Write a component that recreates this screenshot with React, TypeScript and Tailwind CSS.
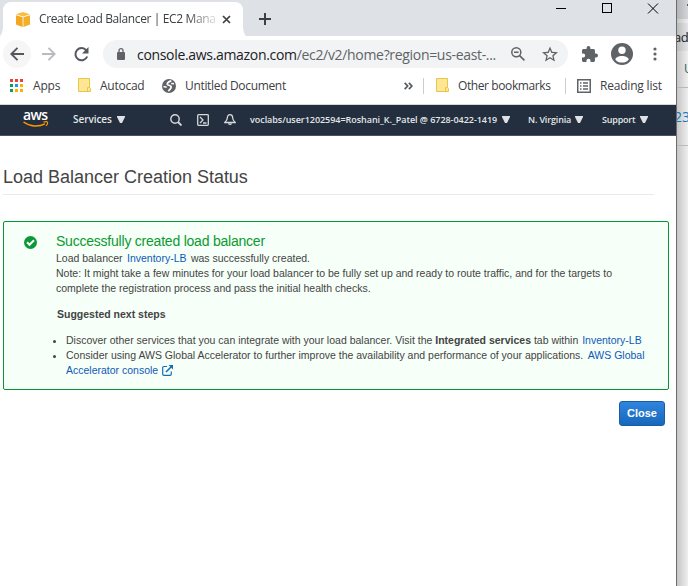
import React from "react";

const ui = "font-['Open_Sans','Noto_Sans',sans-serif]";

function Caret({ className = "" }: { className?: string }) {
  return (
    <svg className={"h-[7px] w-[8px] shrink-0 " + className} viewBox="0 0 8 7">
      <path d="M0 0h8v1L5 7H3L0 1z" fill="#dfe1e4" />
    </svg>
  );
}

function Folder({ className = "" }: { className?: string }) {
  return (
    <svg className={"h-[15px] w-[13px] shrink-0 " + className} viewBox="0 0 13 15">
      <path d="M0.500 0.500h11v9l1 1v3h-12z" fill="#ffe694" stroke="#e8c648" />
      <path d="M9.500 13.500v-4h2" fill="none" stroke="#e8c648" />
    </svg>
  );
}

function TabStrip() {
  return (
    <div className="flex h-9 items-end bg-[#dee1e6]">
      <div className="flex h-[34px] w-[3px] items-end bg-[#dee1e6]">
        <div className="h-2 w-[3px] bg-white [clip-path:polygon(100%_0,100%_100%,0_100%,60%_70%)]" />
      </div>
      <div className="flex h-[34px] w-[240px] items-center rounded-t-[8px] bg-white">
        <svg className="ml-[13px] h-[15px] w-[14px] shrink-0" viewBox="0 0 14 15">
          <path d="M7 0l7 2.300-7 2.100L0 2.300z" fill="#f9bd3b" />
          <path d="M0 3.200l6.600 2V15L0 12.600z" fill="#f2a71f" />
          <path d="M14 3.200l-6.600 2V15L14 12.600z" fill="#f5ae27" />
        </svg>
        <div className={"ml-[9px] w-[176px] shrink-0 whitespace-nowrap text-[12px] tracking-[-0.37px] text-[#3c4043] [mask-image:linear-gradient(to_right,#000_148px,transparent_182px)] " + ui}>
          Create Load Balancer | EC2 Mana
        </div>
        <svg className="ml-[7px] h-[9px] w-[9px] shrink-0" viewBox="0 0 9 9">
          <path d="M1 1l7 7M8 1l-7 7" stroke="#3c4043" strokeWidth="1.700" />
        </svg>
      </div>
      <div className="flex h-[34px] w-[3px] items-end">
        <div className="h-2 w-[3px] bg-white [clip-path:polygon(0_0,0_100%,100%_100%,40%_70%)]" />
      </div>
      <svg className="mb-[11px] ml-[13px] h-3 w-3 shrink-0" viewBox="0 0 12 12">
        <path d="M6 0v12M0 6h12" stroke="#3c4043" strokeWidth="2" />
      </svg>
      <svg className="mb-[22px] ml-[285px] h-[11px] w-[103px] shrink-0" viewBox="0 0 103 11" shapeRendering="crispEdges">
        <path d="M0 5.500h10" stroke="#000" />
        <rect x="46.500" y="0.500" width="9" height="9" fill="none" stroke="#000" />
        <path d="M92 0.500l10 10M102 0.500l-10 10" stroke="#000" shapeRendering="auto" />
      </svg>
    </div>
  );
}

function Toolbar() {
  return (
    <div className="flex h-9 items-center bg-white">
      <div className="ml-[3px] flex h-7 w-7 shrink-0 items-center justify-center rounded-full bg-[#f6f6f6]">
        <svg className="h-[14px] w-[14px]" viewBox="0 0 14 14">
          <path d="M14 7H1.500M7.500 0.800L1.300 7l6.200 6.200" fill="none" stroke="#54585d" strokeWidth="1.900" />
        </svg>
      </div>
      <svg className="ml-[11px] h-[14px] w-[14px] shrink-0" viewBox="0 0 14 14">
        <path d="M0 7h12.500M6.500 0.800L12.700 7l-6.200 6.200" fill="none" stroke="#b9bbbe" strokeWidth="1.900" />
      </svg>
      <svg className="ml-[18px] h-[15px] w-[15px] shrink-0" viewBox="0 0 15 15">
        <path d="M12.300 3.400A6.100 6.100 0 1 0 13.200 9.500" fill="none" stroke="#54585d" strokeWidth="2" />
        <path d="M14.500 0v6.500H8z" fill="#54585d" />
      </svg>
      <div className="ml-[14px] flex h-7 w-[465px] shrink-0 items-center rounded-full bg-[#f1f3f4]">
        <svg className="ml-[14px] h-[12px] w-[8px] shrink-0" viewBox="0 0 8 12">
          <path d="M2 5V2.700a2 2 0 0 1 4 0V5" fill="none" stroke="#5f6368" strokeWidth="1.300" />
          <rect y="4" width="8" height="8" rx="1" fill="#5f6368" />
        </svg>
        <div className={"ml-[12px] w-[366px] shrink-0 whitespace-nowrap text-[14px] tracking-[-0.32px] text-[#5f6368] " + ui}>
          <span className="text-[#202124]">console.aws.amazon.com</span>/ec2/v2/home?region=us-east-...
        </div>
        <svg className="ml-[8px] h-[14px] w-[14px] shrink-0" viewBox="0 0 14 14">
          <circle cx="5.300" cy="5.300" r="4.500" fill="none" stroke="#5f6368" strokeWidth="1.500" />
          <path d="M3 5.300h4.600M8.600 8.600l4.800 4.800" stroke="#5f6368" strokeWidth="1.600" />
        </svg>
        <svg className="ml-[17px] h-[16px] w-[16px] shrink-0" viewBox="2 1.500 20 20">
          <path d="M22 9.240l-7.190-.62L12 2 9.190 8.630 2 9.240l5.460 4.730L5.820 21 12 17.270 18.180 21l-1.630-7.030L22 9.240zM12 15.400l-3.760 2.270 1-4.280-3.320-2.880 4.380-.38L12 6.100l1.710 4.040 4.380.38-3.320 2.880 1 4.280L12 15.400z" fill="#5f6368" />
        </svg>
      </div>
      <svg className="ml-[14px] h-[16px] w-[16px] shrink-0" viewBox="2 1 21 21">
        <path d="M20.500 11H19V7c0-1.100-.9-2-2-2h-4V3.500a2.500 2.500 0 0 0-5 0V5H4c-1.100 0-1.990.9-1.990 2v3.800H3.500a2.700 2.700 0 0 1 0 5.400H2V20c0 1.100.9 2 2 2h3.800v-1.500a2.700 2.700 0 0 1 5.400 0V22H17c1.100 0 2-.9 2-2v-4h1.500a2.500 2.500 0 0 0 0-5z" fill="#5f6368" />
      </svg>
      <svg className="ml-[13px] h-[22px] w-[22px] shrink-0" viewBox="0 0 22 22">
        <circle cx="11" cy="11" r="11" fill="#5f6368" />
        <circle cx="11" cy="7.200" r="3.700" fill="#fff" />
        <path d="M11 13c3.200 0 6.500 1.500 6.700 3.400a8.600 8.600 0 0 1-13.400 0C4.500 14.500 7.800 13 11 13z" fill="#fff" />
      </svg>
      <svg className="ml-[20px] h-[14px] w-[4px] shrink-0" viewBox="0 0 4 14">
        <circle cx="2" cy="2" r="1.600" fill="#5f6368" />
        <circle cx="2" cy="7" r="1.600" fill="#5f6368" />
        <circle cx="2" cy="12" r="1.600" fill="#5f6368" />
      </svg>
    </div>
  );
}

const dots = ["#ea4335", "#ea4335", "#ea4335", "#0f9d58", "#2196f3", "#fbb000", "#0f9d58", "#fbb000", "#fbb000"];

function Bookmarks() {
  const t = "shrink-0 whitespace-nowrap ";
  return (
    <div className={"flex h-[33px] items-center border-b border-[#d6d8db] bg-white pb-[5px] text-[12px] text-[#3c4043] " + ui}>
      <div className="ml-[10px] grid w-[13px] shrink-0 grid-cols-3 gap-[2px]">
        {dots.map((c, i) => (
          <div key={i} className="h-[3px] w-[3px]" style={{ backgroundColor: c }} />
        ))}
      </div>
      <span className={t + "ml-[10px] w-[45px] tracking-[-0.2px]"}>Apps</span>
      <Folder />
      <span className={t + "ml-[9px] w-[62px] tracking-[-0.25px]"}>Autocad</span>
      <svg className="h-[14px] w-[14px] shrink-0" viewBox="0 0 14 14">
        <circle cx="7" cy="7" r="7" fill="#5f6368" />
        <path d="M9.300 2C7 2.300 5 3.800 5.300 5.200c.5 1.300 3.500.8 3.900 2.600.3 1.500-1.200 2.500-2.900 4.200" fill="none" stroke="#fff" strokeWidth="1.800" />
        <path d="M1.500 7.500l3.200.7M9.200 4.400l2.800.3" fill="none" stroke="#fff" strokeWidth="1.500" />
      </svg>
      <span className={t + "ml-[9px] w-[219px] tracking-[-0.33px]"}>Untitled Document</span>
      <svg className="h-[8px] w-[9px] shrink-0" viewBox="0 0 9 8">
        <path d="M0.700 0.800L3.700 4l-3 3.200M4.900 0.800L7.900 4l-3 3.200" fill="none" stroke="#54585d" strokeWidth="1.700" />
      </svg>
      <div className="ml-[10px] h-4 w-px shrink-0 bg-[#c9ccd0]" />
      <Folder className="ml-[12px]" />
      <span className={t + "ml-[9px] w-[107px] tracking-[-0.4px]"}>Other bookmarks</span>
      <div className="h-4 w-px shrink-0 bg-[#c9ccd0]" />
      <svg className="ml-[11px] h-[14px] w-[14px] shrink-0" viewBox="0 0 14 14">
        <rect x="0.750" y="0.750" width="12.500" height="12.500" fill="none" stroke="#5f6368" strokeWidth="1.500" />
        <path d="M3 4h1.500M3 7h1.500M3 10h1.500M6 4h5M6 7h5M6 10h5" stroke="#5f6368" strokeWidth="1.400" />
      </svg>
      <span className={t + "ml-[9px] tracking-[-0.2px]"}>Reading list</span>
    </div>
  );
}

function AwsNav() {
  const t = "shrink-0 whitespace-nowrap ";
  return (
    <div className={"flex h-[31px] items-center border-b border-[#4b5160] bg-[#232f3e] pb-px font-semibold text-[#e4e7ea] " + ui}>
      <div className="ml-[23px] flex w-[26px] shrink-0 flex-col">
        <span className="h-[10px] text-[14px] leading-[7px] font-semibold tracking-[-0.6px] text-white">aws</span>
        <svg className="h-[7px] w-[26px]" viewBox="0 0 26 7">
          <path d="M0.500 1C7 5.800 15.500 6 22 2.800" fill="none" stroke="#ff9900" strokeWidth="1.500" />
          <path d="M20.500 1.300c1.800-.8 3.600-.6 4-.2.300.9-.4 2.700-1.500 3.700" fill="none" stroke="#ff9900" strokeWidth="1.100" />
        </svg>
      </div>
      <span className={t + "ml-[24px] w-[44px] text-[10px] tracking-[-0.05px]"}>Services</span>
      <Caret />
      <svg className="ml-[45px] h-[12px] w-[12px] shrink-0" viewBox="0 0 12 12">
        <circle cx="5" cy="5" r="4.200" fill="none" stroke="#d5d8dc" strokeWidth="1.400" />
        <path d="M8 8l3.500 3.500" stroke="#d5d8dc" strokeWidth="1.800" />
      </svg>
      <svg className="ml-[15px] h-[12px] w-[12px] shrink-0" viewBox="0 0 12 12">
        <rect x="0.700" y="0.700" width="10.600" height="10.600" rx="0.800" fill="none" stroke="#d5d8dc" strokeWidth="1.300" />
        <path d="M3 3l3 3-3 3M6 9h3.500" fill="none" stroke="#d5d8dc" strokeWidth="1.300" />
      </svg>
      <svg className="ml-[15px] h-[12px] w-[12px] shrink-0" viewBox="0 0 12 12">
        <path d="M6 0.700C4 0.700 3.300 2.500 3.300 4c0 2-1 3-2.500 4.500h10.400C9.700 7 8.700 6 8.700 4 8.700 2.500 8 0.700 6 0.700zM4.600 9.500a1.500 1.500 0 0 0 2.800 0" fill="none" stroke="#d5d8dc" strokeWidth="1.300" />
      </svg>
      <span className={t + "ml-[14px] w-[252px] text-[9px] tracking-[-0.04px]"}>voclabs/user1202594=Roshani_K._Patel @ 6728-0422-1419</span>
      <Caret />
      <span className={t + "ml-[18px] w-[47px] text-[9px] tracking-[-0.15px]"}>N. Virginia</span>
      <Caret />
      <span className={t + "ml-[19px] w-[38px] text-[9px] tracking-[-0.2px]"}>Support</span>
      <Caret />
    </div>
  );
}

function Content() {
  return (
    <div className="flex flex-col bg-white font-['Liberation_Sans',sans-serif] text-[10.5px] leading-[15px] text-[#444]">
      <div className="ml-[3px] h-[59px] w-[651px] border-b border-[#eaeaea] pt-[30px] text-[18px] leading-[22px] tracking-[-0.01px] whitespace-nowrap">
        Load Balancer Creation Status
      </div>
      <div className="mt-[26px] ml-[3px] flex h-[169px] w-[666px] rounded-[2px] border border-[#009a33] bg-[#f6fff8]">
        <svg className="mt-[14px] ml-[20px] h-[13px] w-[13px] shrink-0" viewBox="0 0 13 13">
          <circle cx="6.500" cy="6.500" r="6.500" fill="#0a9838" />
          <path d="M3 6.300l2.500 2.500L10 4.300" fill="none" stroke="#fff" strokeWidth="2" />
        </svg>
        <div className="ml-[19px] flex flex-col whitespace-nowrap">
          <div className="mt-[10px] mb-px text-[14px] leading-[18px] tracking-[-0.22px] text-[#0a9a31]">Successfully created load balancer</div>
          <div>
            Load balancer <a className="ml-[1.5px] text-[#0f59b8]">Inventory-LB</a> <span className="ml-[1.5px]">was successfully created.</span>
          </div>
          <div>Note: It might take a few minutes for your load balancer to be fully set up and ready to route traffic, and for the targets to</div>
          <div>complete the registration process and pass the initial health checks.</div>
          <div className="mt-[11px] ml-px font-bold">Suggested next steps</div>
          <div className="mt-[11px] flex">
            <ul className="ml-[10px] flex flex-col">
              <li className="flex items-start">
                <i className="-ml-[13px] mt-[7px] mr-[10px] h-[3px] w-[3px] rounded-full bg-[#444]" />
                <span>
                  Discover other services that you can integrate with your load balancer. Visit the <b>Integrated services</b> tab within <a className="ml-px text-[#0f59b8]">Inventory-LB</a>
                </span>
              </li>
              <li className="flex items-start">
                <i className="-ml-[13px] mt-[7px] mr-[10px] h-[3px] w-[3px] rounded-full bg-[#444]" />
                <span>
                  Consider using AWS Global Accelerator to further improve the availability and performance of your applications. <a className="ml-[1.5px] text-[#0f59b8]">AWS Global<br />Accelerator console</a>
                  <svg className="ml-[4px] inline-block h-[11px] w-[11px] align-[-2px]" viewBox="0 0 11 11">
                    <path d="M5 1.500H2A1.300 1.300 0 0 0 .7 2.800V9A1.300 1.300 0 0 0 2 10.300h6A1.300 1.300 0 0 0 9.300 9V6.500" fill="none" stroke="#146eb4" strokeWidth="1.200" />
                    <path d="M4 7l5-5" stroke="#146eb4" strokeWidth="1.600" />
                    <path d="M6.500 0H11v4.500z" fill="#146eb4" />
                  </svg>
                </span>
              </li>
            </ul>
          </div>
        </div>
      </div>
      <button className="mt-[11px] ml-[619px] flex h-[25px] w-[46px] justify-center rounded-[3px] border border-[#1a5da6] bg-linear-to-b from-[#2f85dc] to-[#1768bd] text-[11px] leading-[22px] font-bold text-white">
        Close
      </button>
    </div>
  );
}

function BackWindow() {
  return (
    <div className={"flex w-[11px] shrink-0 flex-col overflow-hidden bg-linear-to-r from-[#c6c6c6] to-[#efefef] whitespace-nowrap " + ui}>
      <div className="flex h-[19px] justify-end bg-linear-to-r from-[#b2b4b7] to-[#d3d5d8] pt-[4px]">
        <div className="h-[2px] w-px bg-[#5f6368]" />
      </div>
      <div className="h-[4px]" />
      <div className="h-[28px] bg-linear-to-r from-[#b9babc] to-[#e4e5e7] text-[13px] leading-[29px] tracking-[-0.4px] text-[#202124]">
        <span className="-ml-[3px]">ad</span>
      </div>
      <div className="h-[37px] border-b border-[#b9b9b9] pl-[7px] text-[12px] leading-[35px] text-[#3c5a50]">U</div>
      <div className="h-[58px] border-b border-[#b9b9b9] text-[14px] leading-[58px] text-[#1478be]">
        <span className="-ml-[3px]">23</span>
      </div>
    </div>
  );
}

export default function App() {
  return (
    <div className="flex h-[586px] w-[688px] overflow-hidden bg-white">
      <div className="flex w-[676px] shrink-0 flex-col overflow-hidden">
        <TabStrip />
        <Toolbar />
        <Bookmarks />
        <AwsNav />
        <Content />
      </div>
      <div className="w-px shrink-0 bg-[#6d6d6d]" />
      <BackWindow />
    </div>
  );
}
